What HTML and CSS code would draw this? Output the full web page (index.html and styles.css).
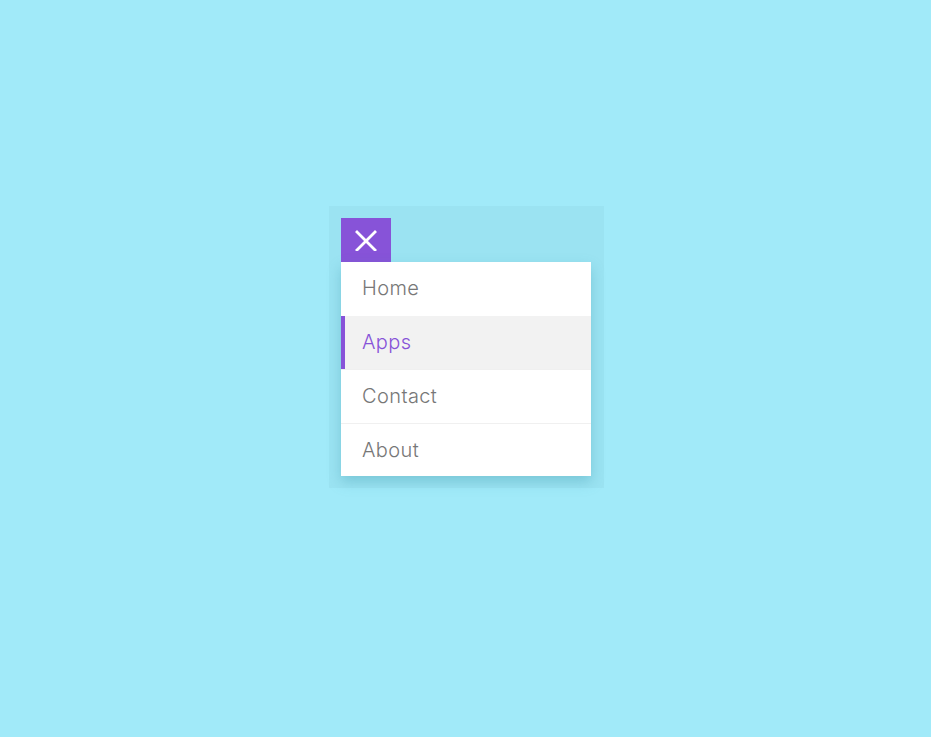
FILE: index.html
```html
<!DOCTYPE html>
<html lang="en">
<head>
    <meta charset="UTF-8">
    <meta name="viewport" content="width=device-width, initial-scale=1.0">
    <title>Menu</title>
    <link rel="stylesheet" href="styles.css">
</head>
<body>
    <div class="menu-wrap">
        <button class="menu-toggle" aria-label="Close menu">
            <svg width="22" height="22" viewBox="0 0 22 22">
                <path d="M2 3 L20 21 M20 3 L2 21" stroke="#fff" stroke-width="2.8" stroke-linecap="square"/>
            </svg>
        </button>
        <ul class="menu">
            <li><a href="#">Home</a></li>
            <li class="active"><a href="#">Apps</a></li>
            <li><a href="#">Contact</a></li>
            <li><a href="#">About</a></li>
        </ul>
    </div>
</body>
</html>
```

FILE: styles.css
```css
/* Page */
body {
    margin: 0;
    min-height: 737px;
    background: #a1eaf9;
    font-family: "Inter", "Noto Sans", sans-serif;
    display: flex;
    justify-content: center;
    align-items: flex-start;
    padding-top: 206px;
    box-sizing: border-box;
}
.menu-wrap {
    background: #9be3f2;
    padding: 12px 13px 12px 12px;
    margin-left: 2px;
    width: 250px;
}
.menu-toggle {
    display: flex;
    align-items: center;
    justify-content: center;
    width: 50px;
    height: 44px;
    border: 0;
    padding: 0;
    background: #8753d8;
    cursor: pointer;
}
.menu {
    list-style: none;
    margin: 0;
    padding: 0;
    background: #fff;
    box-shadow: 0 6px 12px rgba(60, 150, 170, 0.35);
}
.menu li {
    border-top: 1px solid #f0f0f0;
}
.menu li:first-child,
.menu li.active {
    border-top: 0;
}
.menu a {
    display: block;
    height: 52.5px;
    line-height: 52px;
    padding-left: 21px;
    font-size: 20px;
    font-weight: 300;
    letter-spacing: 0.4px;
    color: #777;
    text-decoration: none;
}
.menu li:first-child a {
    height: 54px;
    line-height: 53px;
}
.menu li.active a {
    height: 53px;
    background: #f2f2f2;
    color: #8753d8;
    border-left: 4px solid #8753d8;
    padding-left: 17px;
}
```
